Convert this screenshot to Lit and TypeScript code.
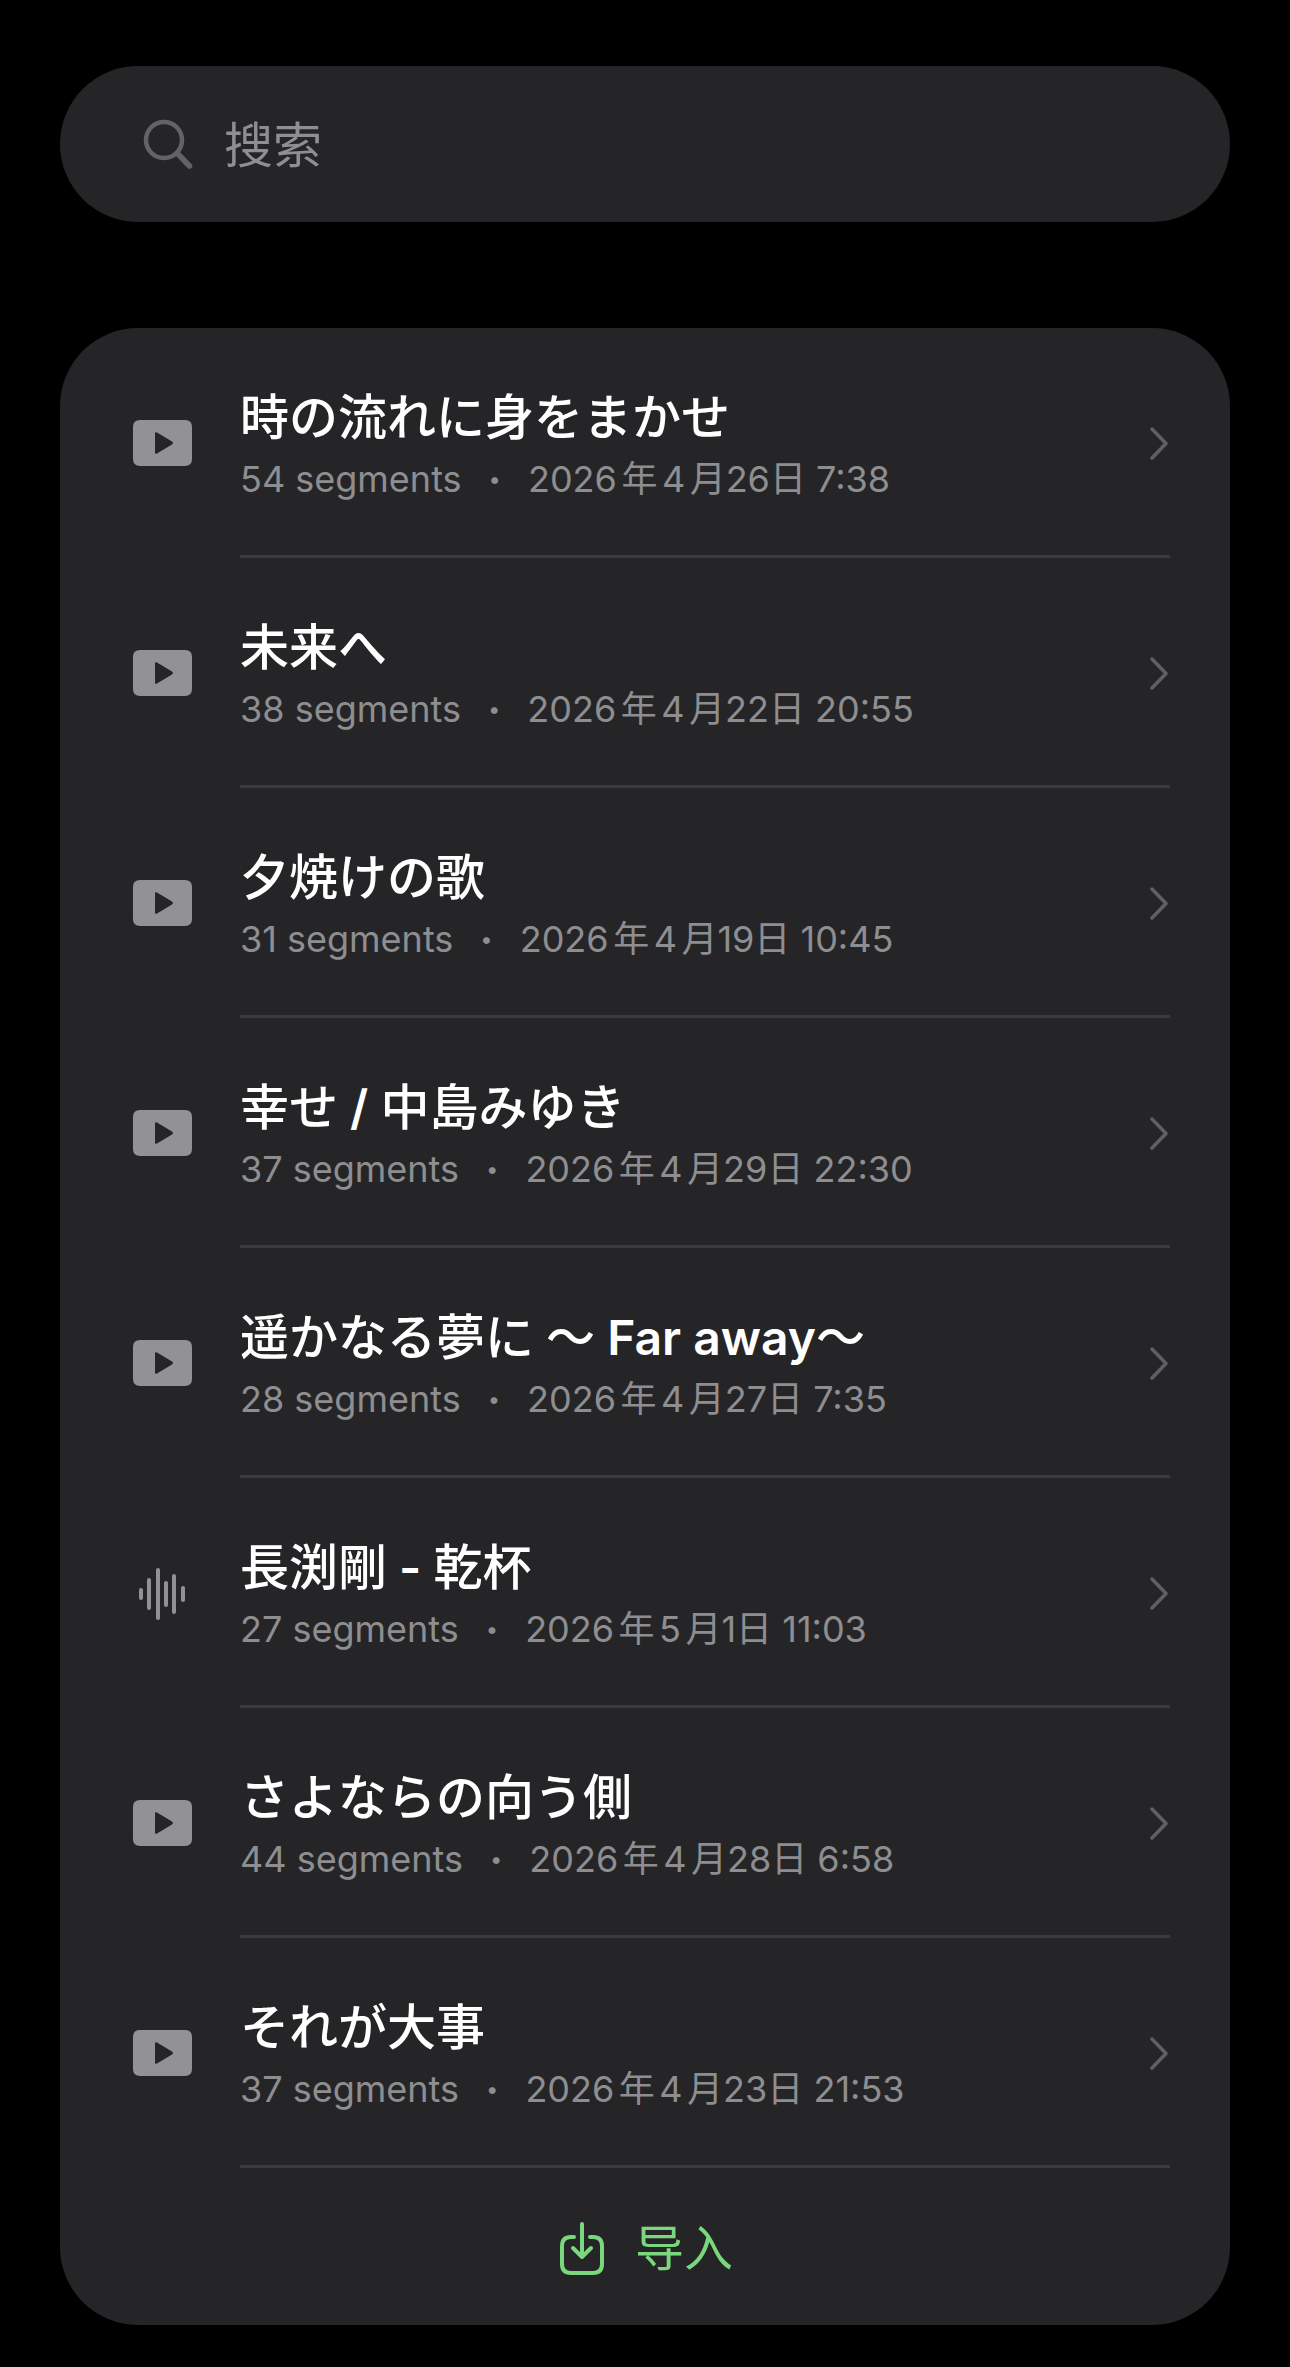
import { LitElement, html, svg, css } from "lit";
import { customElement, property } from "lit/decorators.js";

type Kind = "video" | "audio";

interface Song {
  title: string;
  kind: Kind;
  segments: number;
  month: string;
  time: string;
}

const SONGS: Song[] = [
  { title: "時の流れに身をまかせ", kind: "video", segments: 54, month: "2026年4月", time: "26日 7:38" },
  { title: "未来へ", kind: "video", segments: 38, month: "2026年4月", time: "22日 20:55" },
  { title: "夕焼けの歌", kind: "video", segments: 31, month: "2026年4月", time: "19日 10:45" },
  { title: "幸せ / 中島みゆき", kind: "video", segments: 37, month: "2026年4月", time: "29日 22:30" },
  { title: "遥かなる夢に ～ Far away～", kind: "video", segments: 28, month: "2026年4月", time: "27日 7:35" },
  { title: "長渕剛 - 乾杯", kind: "audio", segments: 27, month: "2026年5月", time: "1日 11:03" },
  { title: "さよならの向う側", kind: "video", segments: 44, month: "2026年4月", time: "28日 6:58" },
  { title: "それが大事", kind: "video", segments: 37, month: "2026年4月", time: "23日 21:53" },
];

/* Bars of the waveform icon: centre x and half height. */
const BARS = [
  [9, 4],
  [17, 14],
  [26, 24],
  [34, 11],
  [42, 18],
  [51, 6],
];

const videoIcon = html`
  <svg width="60" height="60" viewBox="0 0 60 60" aria-hidden="true">
    <path
      fill="currentColor"
      fill-rule="evenodd"
      d="M8 7H53Q60 7 60 14V46Q60 53 53 53H8Q1 53 1 46V14Q1 7 8 7ZM23 20.500V39.500Q23 41.500 25 40.500L40 31.500Q42 30 40 28.500L25 19.500Q23 18.500 23 20.500Z"
    />
  </svg>
`;

const audioIcon = html`
  <svg width="60" height="60" viewBox="0 0 60 60" aria-hidden="true">
    ${BARS.map(
      ([x, h]) => svg`<line x1=${x} x2=${x} y1=${31 - h} y2=${31 + h}
        stroke="currentColor" stroke-width="4" stroke-linecap="round" />`
    )}
  </svg>
`;

/* Latin runs of a title are set a step bolder than the kana and kanji. */
const titleRuns = (title: string) =>
  title
    .split(/([\x20-\x7e]+)/)
    .map((run) => (/^[\x20-\x7e]+$/.test(run) ? html`<span class="latin">${run}</span>` : run));

@customElement("song-row")
export class SongRow extends LitElement {
  @property({ attribute: false }) song!: Song;

  static styles = css`
    :host {
      display: block;
    }
    .row {
      display: grid;
      grid-template-columns: 60px 1fr 20px;
      align-items: stretch;
      min-height: 230px;
      padding: 0 60px 0 72px;
      color: inherit;
      text-decoration: none;
    }
    .icon {
      display: flex;
      align-items: center;
      color: #929294;
    }
    .text {
      display: flex;
      flex-direction: column;
      justify-content: center;
      gap: 2px;
      margin-left: 48px;
      padding-top: 6px;
      box-shadow: inset 0 -3px #3a3a3c;
    }
    .title {
      font-size: 49px;
      line-height: 64px;
      font-weight: 500;
      color: #fff;
    }
    .latin {
      font-size: 48px;
      font-weight: 600;
      white-space: pre-wrap;
    }
    .meta {
      display: flex;
      gap: 27px;
      align-items: center;
      font-size: 36px;
      line-height: 54px;
      color: #8e8e91;
    }
    .month {
      text-autospace: normal;
    }
    .dot {
      font-size: 22px;
    }
    .chevron {
      display: flex;
      align-items: center;
      color: #606063;
      box-shadow: inset 0 -3px #3a3a3c;
    }
  `;

  render() {
    const { title, kind, segments, month, time } = this.song;
    return html`
      <a class="row" href="#">
        <span class="icon">${kind === "video" ? videoIcon : audioIcon}</span>
        <span class="text">
          <span class="title" lang="ja">${titleRuns(title)}</span>
          <span class="meta">
            <span>${segments} segments</span>
            <span class="dot">•</span>
            <time><span class="month">${month}</span>${time}</time>
          </span>
        </span>
        <span class="chevron">
          <svg width="20" height="36" viewBox="0 0 20 36" aria-hidden="true">
            <path
              d="M2 4L16 18.500L2 33"
              fill="none"
              stroke="currentColor"
              stroke-width="3.500"
              stroke-linecap="round"
              stroke-linejoin="round"
            />
          </svg>
        </span>
      </a>
    `;
  }
}

@customElement("app-root")
export class AppRoot extends LitElement {
  static styles = css`
    :host {
      display: block;
      box-sizing: border-box;
      min-height: 100vh;
      padding: 66px 60px 42px;
      background: #000;
      font-family: Inter, "Noto Sans CJK SC", sans-serif;
      text-autospace: no-autospace;
    }
    .search {
      display: flex;
      align-items: center;
      gap: 30px;
      height: 156px;
      padding: 0 60px 0 82px;
      box-sizing: border-box;
      border-radius: 78px;
      background: #252527;
      color: #636366;
    }
    .field {
      flex: 1;
      min-width: 0;
      padding: 4px 0 0;
      border: 0;
      outline: 0;
      background: none;
      font: 400 49px/72px Inter, "Noto Sans CJK SC", sans-serif;
      color: #fff;
    }
    .field::placeholder {
      color: #8e8e93;
      opacity: 1;
    }
    .card {
      margin-top: 106px;
      border-radius: 78px;
      background: #252527;
      overflow: hidden;
    }
    .list {
      margin: 0;
      padding: 0;
      list-style: none;
    }
    .import {
      display: flex;
      align-items: center;
      justify-content: center;
      gap: 30px;
      box-sizing: border-box;
      width: 100%;
      height: 157px;
      padding: 4px 0 0;
      border: 0;
      background: none;
      font: 400 49px/72px Inter, "Noto Sans CJK SC", sans-serif;
      color: #7bd77d;
    }
  `;

  render() {
    return html`
      <label class="search">
        <svg width="52" height="52" viewBox="0 0 52 52" aria-hidden="true">
          <g fill="none" stroke="currentColor" stroke-linecap="round">
            <circle cx="22" cy="22" r="18" stroke-width="4.500" />
            <path d="M35 35L47.500 48" stroke-width="5.500" />
          </g>
        </svg>
        <input class="field" type="search" placeholder="搜索" aria-label="搜索" />
      </label>
      <section class="card">
        <ul class="list">
          ${SONGS.map((song) => html`<li><song-row .song=${song}></song-row></li>`)}
        </ul>
        <button class="import" type="button">
          <svg width="48" height="56" viewBox="0 0 48 56" aria-hidden="true">
            <path
              d="M17 16H14Q5 16 5 25V43Q5 52 14 52H36Q45 52 45 43V25Q45 16 36 16H33M25 3V35M16 27L25 36L34 27"
              fill="none"
              stroke="currentColor"
              stroke-width="4"
              stroke-linecap="round"
              stroke-linejoin="round"
            />
          </svg>
          <span>导入</span>
        </button>
      </section>
    `;
  }
}
